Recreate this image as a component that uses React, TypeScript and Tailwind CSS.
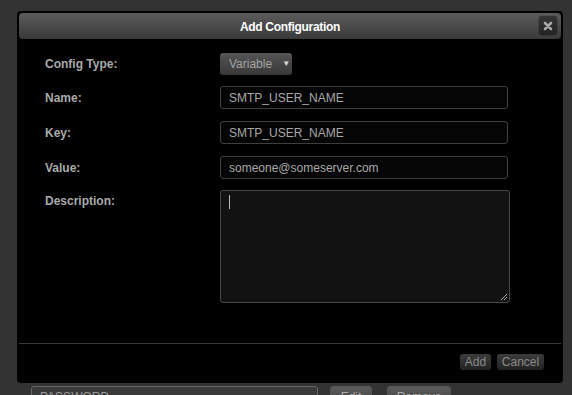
const fields = [
  { label: 'Name:', value: 'SMTP_USER_NAME' },
  { label: 'Key:', value: 'SMTP_USER_NAME' },
  { label: 'Value:', value: 'someone@someserver.com' },
]

const ConfigDialog = () => {
  return (
    <div className="absolute left-[17px] top-[11px] flex h-[372px] w-[546px] flex-col rounded-[4px] bg-black p-[2px]">
      <div className="relative flex h-[26px] shrink-0 items-center justify-center rounded-[4px] bg-gradient-to-b from-[#5c5c5c] to-[#393939]">
        <span className="pt-px text-[12px] font-bold tracking-[-0.3px] text-white">Add Configuration</span>
        <button
          type="button"
          className="absolute right-[4px] top-[3px] flex h-[19px] w-[18px] items-center justify-center rounded-[3px] bg-gradient-to-b from-[#353535] to-[#232323] shadow-[0_0_1px_#000]"
        >
          <svg width="10" height="10" viewBox="0 0 10 10">
            <path d="M2 2 L8 8 M8 2 L2 8" stroke="#a8a8a8" strokeWidth="2.6" strokeLinecap="round" />
          </svg>
        </button>
      </div>

      <div className="flex flex-1 flex-col pl-[26px] pt-[14px]">
        <div className="flex h-[22px] items-center">
          <span className="w-[175px] text-[12px] font-bold text-[#a9a9a9]">Config Type:</span>
          <button
            type="button"
            className="flex h-[22px] w-[72px] items-center rounded-[3px] bg-gradient-to-b from-[#555] to-[#383838] pl-[9px] text-[12px] text-[#a5a5a5]"
          >
            Variable
            <span className="ml-[10px] text-[8px] leading-none text-[#ddd]">▼</span>
          </button>
        </div>

        {fields.map((f, i) => (
          <div key={f.label} className={i === 0 ? 'mt-[11px] flex h-[23px] items-center' : 'mt-[12px] flex h-[23px] items-center'}>
            <span className="w-[175px] text-[12px] font-bold text-[#a9a9a9]">{f.label}</span>
            <div className="flex h-[23px] w-[288px] items-center rounded-[3px] border border-[#3e3e3e] bg-[#050505] pl-[8px] text-[12px] text-[#a8a8a8]">
              {f.value}
            </div>
          </div>
        ))}

        <div className="mt-[11px] flex">
          <span className="w-[175px] pt-[2px] text-[12px] font-bold text-[#a9a9a9]">Description:</span>
          <div className="relative h-[113px] w-[290px] rounded-[3px] border border-[#484848] bg-[#121212]">
            <div className="absolute left-[8px] top-[4px] h-[14px] w-px bg-[#bbb]" />
            <svg className="absolute bottom-[1px] right-[1px]" width="8" height="8" viewBox="0 0 8 8">
              <path d="M1 7 L7 1 M4 7 L7 4" stroke="#aaa" strokeWidth="1" />
            </svg>
          </div>
        </div>
      </div>

      <div className="mb-[1px] flex h-[37px] shrink-0 items-center justify-end gap-[6px] border-t border-[#3a3a3a] pr-[17px]">
        <button
          type="button"
          className="h-[16px] w-[31px] rounded-[3px] bg-gradient-to-b from-[#3c3c3c] to-[#222] text-[12px] leading-[16px] text-[#8a8a8a]"
        >
          Add
        </button>
        <button
          type="button"
          className="h-[16px] w-[47px] rounded-[3px] bg-gradient-to-b from-[#3c3c3c] to-[#222] text-[12px] leading-[16px] text-[#8a8a8a]"
        >
          Cancel
        </button>
      </div>
    </div>
  )
}

export default function App() {
  return (
    <div className="relative h-[395px] w-[572px] overflow-hidden bg-[#333] font-['Liberation_Sans',Arial,sans-serif]">
      <div className="flex items-start gap-[12px] pl-[31px] pt-[386px]">
        <div className="h-[22px] w-[287px] rounded-[3px] border border-[#666] bg-[#3a3a3a] pl-[8px] text-[12px] leading-[20px] text-[#999]">
          PASSWORD
        </div>
        <div className="h-[22px] w-[42px] rounded-[4px] bg-gradient-to-b from-[#5a5a5a] to-[#444] text-center text-[12px] leading-[22px] text-[#aaa]">Edit</div>
        <div className="ml-[3px] h-[22px] w-[64px] rounded-[4px] bg-gradient-to-b from-[#5a5a5a] to-[#444] text-center text-[12px] leading-[22px] text-[#aaa]">Remove</div>
      </div>
      <ConfigDialog />
    </div>
  )
}
